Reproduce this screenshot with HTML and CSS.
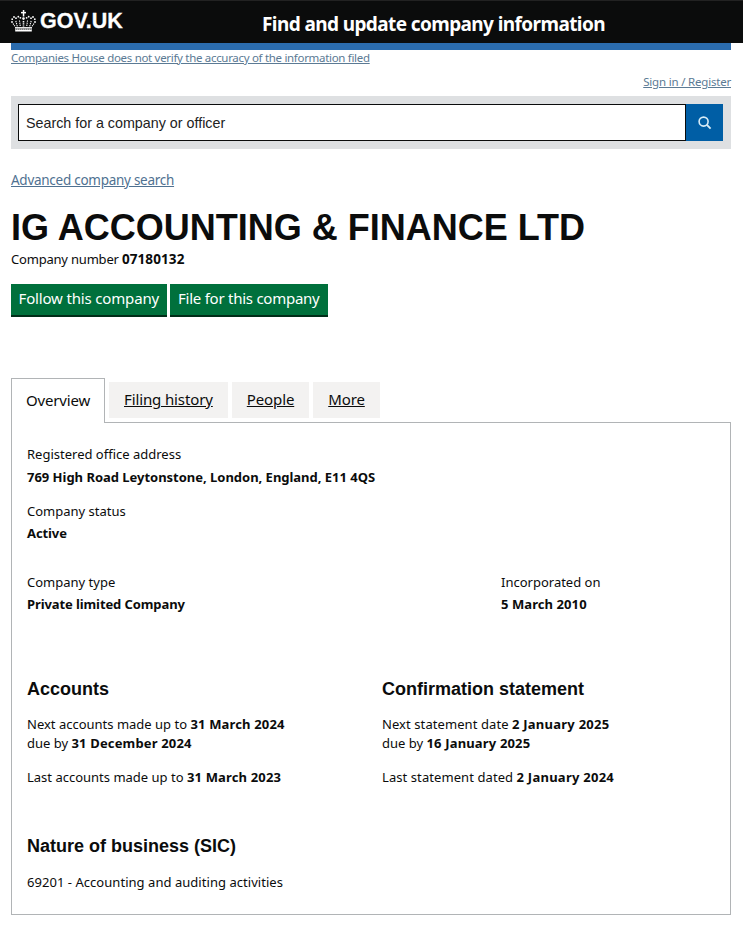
FILE: index.html
```html
<!DOCTYPE html>
<html lang="en">
<head>
<meta charset="utf-8">
<title>IG ACCOUNTING &amp; FINANCE LTD</title>
<link rel="stylesheet" href="styles.css">
</head>
<body>
<header class="top">
  <a class="logo">
    <svg class="crown" viewBox="0 0 25 22" width="25" height="22" aria-hidden="true">
      <g fill="#fff">
        <rect x="11.8" y="0" width="1.5" height="6.5"/><rect x="10" y="1.9" width="5" height="1.5"/>
        <circle cx="12.5" cy="8.6" r="1.3"/>
        <circle cx="9.4" cy="7.8" r=".9"/><circle cx="15.6" cy="7.8" r=".9"/>
        <circle cx="7.3" cy="6.7" r=".9"/><circle cx="17.7" cy="6.7" r=".9"/>
        <circle cx="5" cy="8.2" r=".9"/><circle cx="20" cy="8.2" r=".9"/>
        <circle cx="3" cy="7" r=".9"/><circle cx="22" cy="7" r=".9"/>
        <circle cx="1.2" cy="9.2" r=".9"/><circle cx="23.8" cy="9.2" r=".9"/>
        <circle cx="1" cy="12" r=".9"/><circle cx="24" cy="12" r=".9"/>
      </g>
      <g fill="none" stroke="#fff">
        <path d="M12.5 11v5.5" stroke-width="1.6" stroke-dasharray="1.4 .8"/>
        <path d="M8.5 10.5l.8 6M16.5 10.5l-.8 6M4.8 11l1.6 5.5M20.2 11l-1.6 5.5M2 13.5l2.4 3.5M23 13.5l-2.4 3.5" stroke-width="1.1" stroke-dasharray="1.3 .8"/>
        <path d="M4 17.8h17" stroke-width="1.4"/>
        <path d="M4.2 20.6h16.6" stroke-width="1.8"/>
        <path d="M4.2 19.2h16.6" stroke-width="1" stroke-dasharray="1.2 .8"/>
      </g>
    </svg>
    <span class="logo-text">GOV.UK</span>
  </a>
  <span class="service">Find and update company information</span>
</header>
<div class="page">
  <div class="blue-bar"></div>
  <a class="small-link disclaimer" href="#">Companies House does not verify the accuracy of the information filed</a>
  <div class="sign-row"><a class="small-link" href="#">Sign in / Register</a></div>
  <form class="search">
    <div class="search-input">Search for a company or officer</div>
    <div class="search-btn">
      <svg viewBox="0 0 14 14" width="14" height="14" aria-hidden="true"><circle cx="5.6" cy="5.6" r="4.5" fill="none" stroke="#d8ecf7" stroke-width="1.6"/><path d="M8.9 8.9l3.7 3.7" stroke="#d8ecf7" stroke-width="1.9"/></svg>
    </div>
  </form>
  <a class="advanced" href="#">Advanced company search</a>
  <h1>IG ACCOUNTING &amp; FINANCE LTD</h1>
  <p class="number">Company number <strong>07180132</strong></p>
  <div class="actions">
    <a class="btn" href="#">Follow this company</a>
    <a class="btn file" href="#">File for this company</a>
  </div>
  <nav class="tabs">
    <span class="tab active">Overview</span>
    <a class="tab" href="#">Filing history</a>
    <a class="tab" href="#">People</a>
    <a class="tab" href="#">More</a>
  </nav>
  <main class="panel">
    <dl class="field addr"><dt>Registered office address</dt><dd>769 High Road Leytonstone, London, England, E11 4QS</dd></dl>
    <dl class="field status"><dt>Company status</dt><dd>Active</dd></dl>
    <div class="type-row">
      <dl class="field"><dt>Company type</dt><dd>Private limited Company</dd></dl>
      <dl class="field"><dt>Incorporated on</dt><dd class="date">5 March 2010</dd></dl>
    </div>
    <div class="due-row">
      <section>
        <h2>Accounts</h2>
        <p>Next accounts made up to <strong>31 March 2024</strong><br>due by <strong>31 December 2024</strong></p>
        <p>Last accounts made up to <strong>31 March 2023</strong></p>
      </section>
      <section>
        <h2>Confirmation statement</h2>
        <p><span class="wide">Next statement date</span> <strong class="wide">2 January 2025</strong><br>due by <strong>16 January 2025</strong></p>
        <p><span class="wide">Last statement dated</span> <strong class="wide">2 January 2024</strong></p>
      </section>
    </div>
    <h2 class="sic-title">Nature of business (SIC)</h2>
    <p class="sic">69201 - Accounting and auditing activities</p>
  </main>
</div>
</body>
</html>
```
FILE: styles.css
```css
* { box-sizing: border-box; }
html, body { margin: 0; padding: 0; background: #fff; }
body { font-family: "Noto Sans", Arial, sans-serif; color: #0b0c0c; font-size: 14px; }
a { color: inherit; }
.top { background: #0b0c0c; height: 43px; display: flex; align-items: center; padding: 1px 0 0 11px; border-top: 1px solid #222; }
.logo { display: flex; align-items: center; gap: 4px; color: #fff; width: 251px; }
.crown { flex: none; margin-top: -3px; }
.logo-text { font-family: "Liberation Sans", Arial, sans-serif; font-weight: 700; font-size: 21.5px; line-height: 26px; margin-top: -3px; -webkit-text-stroke: 0.3px #fff; }
.service { color: #fff; font-weight: 700; font-size: 19px; letter-spacing: -0.6px; line-height: 26px; white-space: nowrap; margin-top: 2px; }
.page { padding: 0 12px 0 11px; }
.blue-bar { height: 7px; background: #2b6cae; }
.small-link { font-size: 11.5px; line-height: 16px; color: #5b7a94; letter-spacing: -0.2px; }
.disclaimer { display: block; margin-top: 0; letter-spacing: -0.31px; }
.sign-row { text-align: right; margin-top: 5px; height: 25px; }
.search { background: #dee0e2; height: 53px; padding: 8px 8px 8px 7px; display: flex; }
.search-input { flex: 1; height: 37px; background: #fff; border: 1px solid #0b0c0c; padding: 0 7px; font-family: "Liberation Sans", Arial, sans-serif; font-size: 14.3px; line-height: 37px; color: #222; }
.search-btn { width: 37px; height: 37px; background: #005ea5; display: flex; align-items: center; justify-content: center; }
.advanced { display: block; margin-top: 22px; font-size: 13.5px; line-height: 18px; color: #4f7191; letter-spacing: -0.27px; }
h1 { margin: 18px 0 0; font-family: "Liberation Sans", Arial, sans-serif; font-weight: 700; font-size: 36px; line-height: 42px; color: #0b0c0c; white-space: nowrap; }
.number { margin: 0; font-size: 13px; line-height: 20px; letter-spacing: -0.2px; }
.number strong { font-size: 13.5px; letter-spacing: 0.1px; }
.actions { display: flex; gap: 3px; margin-top: 15px; }
.btn { background: #00703c; color: #fff; text-decoration: none; height: 33px; padding: 0 7.5px; font-size: 15px; line-height: 29px; letter-spacing: -0.16px; border-bottom: 2px solid #002d18; white-space: nowrap; }
.btn.file { padding: 0 8.5px; letter-spacing: -0.25px; }
.tabs { display: flex; align-items: flex-end; gap: 4px; margin-top: 61px; position: relative; z-index: 1; margin-bottom: -1px; }
.tab { background: #f3f2f1; height: 36px; padding: 0 15px; font-size: 15px; line-height: 35px; margin-bottom: 5px; color: #0b0c0c; letter-spacing: -0.12px; }
.tab.active { background: #fff; height: 45px; margin: 0; border: 1px solid #b1b4b6; border-bottom: 0; line-height: 43px; padding: 0 14px; letter-spacing: -0.18px; }
.panel { border: 1px solid #b1b4b6; height: 493px; padding: 21px 15px 0; }
.field { margin: 0; }
dt { font-size: 13px; line-height: 20px; letter-spacing: 0; }
dd { margin: 2px 0 0; font-size: 13px; line-height: 20px; font-weight: 700; letter-spacing: -0.1px; }
.addr dd { margin-top: 3px; letter-spacing: -0.02px; }
.date { letter-spacing: 0.08px; }
.status { margin-top: 14px; }
.type-row { display: grid; grid-template-columns: 474px 1fr; margin-top: 29px; }
.due-row { display: grid; grid-template-columns: 355px 1fr; margin-top: 63px; }
h2 { margin: 0; font-family: "Liberation Sans", Arial, sans-serif; font-weight: 700; font-size: 18px; line-height: 24px; }
.due-row p { margin: 15px 0 0; font-size: 13px; line-height: 19px; letter-spacing: 0; }
.due-row p strong { letter-spacing: 0.16px; }
.due-row p span.wide { letter-spacing: 0.08px; }
.due-row p strong.wide { letter-spacing: 0.25px; }
.due-row h2 + p { margin-top: 14px; }
.sic-title { margin-top: 47px; }
.sic { margin: 14px 0 0; font-size: 13px; line-height: 20px; letter-spacing: 0.04px; }
```
